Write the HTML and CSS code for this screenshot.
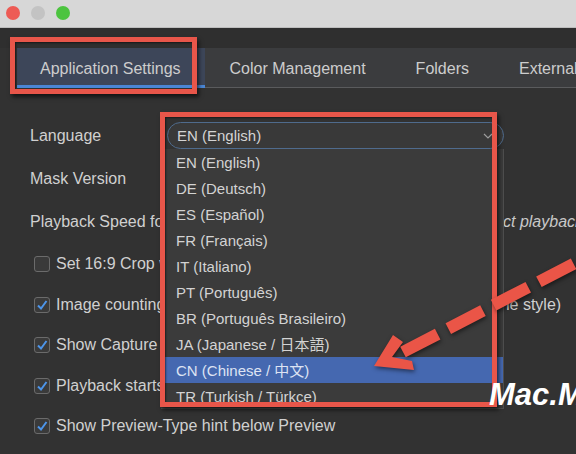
FILE: index.html
```html
<!DOCTYPE html>
<html>
<head>
<meta charset="utf-8">
<link rel="stylesheet" href="styles.css">
</head>
<body>
<div class="window">
  <div class="titlebar">
    <span class="light red"></span>
    <span class="light gray"></span>
    <span class="light green"></span>
  </div>
  <div class="strip"></div>
  <div class="tabs">
    <div class="tab active">Application Settings</div>
    <div class="tab">Color Management</div>
    <div class="tab">Folders</div>
    <div class="tab">External Editors</div>
  </div>
  <div class="content">
    <div class="row">
      <span class="label">Language</span>
      <div class="select lang">
        <span>EN (English)</span>
        <svg class="chev" width="10" height="6" viewBox="0 0 10 6"><path d="M1 1 L5 5 L9 1" fill="none" stroke="#9c9c9c" stroke-width="1.2"/></svg>
      </div>
    </div>
    <div class="row">
      <span class="label">Mask Version</span>
      <div class="select"><span>Version 2</span></div>
    </div>
    <div class="row">
      <span class="label">Playback Speed for Videos</span>
      <div class="select speed"><span>1.0x</span></div>
      <span class="hint">(direct playback speed)</span>
    </div>
    <div class="check-row">
      <span class="box"></span>
      <span class="ctext">Set 16:9 Crop when importing videos</span>
    </div>
    <div class="check-row">
      <span class="box on"><svg width="12" height="12" viewBox="0 0 12 12"><path d="M2 6.5 L5 9.5 L10.5 2" fill="none" stroke="#4d95ea" stroke-width="2"/></svg></span>
      <span class="ctext">Image counting in filenames starts at 1 instead of 0 (Capture One style)</span>
    </div>
    <div class="check-row">
      <span class="box on"><svg width="12" height="12" viewBox="0 0 12 12"><path d="M2 6.5 L5 9.5 L10.5 2" fill="none" stroke="#4d95ea" stroke-width="2"/></svg></span>
      <span class="ctext">Show Capture Info in Preview</span>
    </div>
    <div class="check-row">
      <span class="box on"><svg width="12" height="12" viewBox="0 0 12 12"><path d="M2 6.5 L5 9.5 L10.5 2" fill="none" stroke="#4d95ea" stroke-width="2"/></svg></span>
      <span class="ctext">Playback starts automatically</span>
    </div>
    <div class="check-row">
      <span class="box on"><svg width="12" height="12" viewBox="0 0 12 12"><path d="M2 6.5 L5 9.5 L10.5 2" fill="none" stroke="#4d95ea" stroke-width="2"/></svg></span>
      <span class="ctext">Show Preview-Type hint below Preview</span>
    </div>
  </div>

  <ul class="menu">
    <li>EN (English)</li>
    <li>DE (Deutsch)</li>
    <li>ES (Español)</li>
    <li>FR (Français)</li>
    <li>IT (Italiano)</li>
    <li>PT (Português)</li>
    <li>BR (Português Brasileiro)</li>
    <li>JA (Japanese / 日本語)</li>
    <li class="sel">CN (Chinese / 中文)</li>
    <li>TR (Turkish / Türkçe)</li>
    <li>RU (Russian / Русский)</li>
  </ul>

  <div class="mark mark-tab"></div>
  <div class="mark mark-menu"></div>

  <div class="watermark">Mac.Mi</div>

  <svg class="arrow" width="576" height="454" viewBox="0 0 576 454">
    <g fill="#ea5547" stroke="#ea5547">
      <path d="M403 352 L610 245" fill="none" stroke-width="12" stroke-dasharray="39 12"/>
      <polygon stroke="none" points="374,366 393,335 403,342 392,357 412,361 414,370"/>
    </g>
  </svg>
</div>
</body>
</html>
```

FILE: styles.css
```css
* { box-sizing: border-box; }
html, body { margin: 0; padding: 0; }
body {
  width: 576px;
  height: 454px;
  overflow: hidden;
  background: #323232;
  font-family: "Liberation Sans", Arial, sans-serif;
  color: #cfcfcf;
}
.window {
  position: relative;
  width: 576px;
  height: 454px;
  overflow: hidden;
  background: #323232;
}
.titlebar {
  height: 28px;
  background: #d7d7d7;
  border-bottom: 1px solid #bdbdbd;
  display: flex;
  align-items: center;
  gap: 11px;
  padding: 0 0 2px 6px;
}
.light {
  width: 14px;
  height: 14px;
  border-radius: 50%;
  display: block;
}
.light.red { background: #ed5b55; }
.light.gray { background: #c3c3c3; }
.light.green { background: #4cc43f; }
.strip {
  height: 20px;
  background: #2f2f2f;
}
.tabs {
  margin-left: 17px;
  height: 40px;
  background: #3b3c3e;
  box-shadow: inset 0 -1px #5a5b5d;
  display: flex;
  white-space: nowrap;
}
.tab {
  height: 40px;
  padding: 1px 25px 0;
  display: flex;
  align-items: center;
  font-size: 16px;
  color: #cdcdcd;
  flex: none;
}
.tab.active {
  padding: 1px 24px 0 23px;
  background: #3d4659;
  box-shadow: inset 0 -3px #4a86d5;
}
.content {
  padding-top: 26px;
  background: #323232;
}
.row {
  height: 43px;
  display: flex;
  align-items: center;
  padding-left: 30px;
  white-space: nowrap;
}
.label {
  width: 137px;
  flex: none;
  font-size: 16px;
  color: #d0d0d0;
  overflow: hidden;
}
.select {
  width: 337px;
  flex: none;
  height: 27px;
  border: 1px solid #555;
  border-radius: 14px;
  background: #393939;
  display: flex;
  align-items: center;
  justify-content: space-between;
  padding: 0 10px 0 9px;
  font-size: 15px;
  color: #d4d4d4;
}
.select.lang {
  border-color: #4f6b8d;
}
.select.speed {
  width: 292px;
}
.hint {
  margin-left: 12px;
  flex: none;
  font-size: 16px;
  font-style: italic;
  color: #c8c8c8;
}
.check-row {
  height: 40.5px;
  display: flex;
  align-items: center;
  padding-left: 34px;
  white-space: nowrap;
}
.row + .check-row { margin-top: 1px; }
.box {
  width: 16px;
  height: 16px;
  border: 1px solid #6b6b6b;
  border-radius: 3px;
  background: #3a3a3a;
  margin-right: 6px;
  display: flex;
  align-items: center;
  justify-content: center;
  flex: none;
}
.ctext {
  font-size: 16px;
  color: #d0d0d0;
  flex: none;
}
.menu {
  position: absolute;
  left: 161px;
  top: 149px;
  width: 343px;
  height: 260px;
  margin: 0;
  padding: 0;
  list-style: none;
  overflow: hidden;
  background: #3b3b3b;
  border-right: 1px solid #4e4e4e;
  border-bottom: 1px solid #4e4e4e;
}
.menu li {
  height: 26px;
  line-height: 27px;
  padding-left: 15px;
  font-size: 15px;
  color: #d3d3d3;
  font-family: "Liberation Sans", Arial, "Noto Sans CJK SC", sans-serif;
  white-space: nowrap;
}
.menu li.sel {
  background: #4568b0;
  color: #dde3f3;
}
.mark {
  position: absolute;
  border: 5px solid #e8564a;
  box-shadow: 2px 3px 4px rgba(0, 0, 0, 0.6), inset 1px 1px 2px rgba(0, 0, 0, 0.5);
}
.mark-tab {
  left: 10px;
  top: 37px;
  width: 187px;
  height: 57px;
}
.mark-menu {
  left: 160px;
  top: 112px;
  width: 337px;
  height: 295px;
}
.watermark {
  position: absolute;
  left: 489px;
  top: 379px;
  font-size: 31px;
  line-height: 1;
  font-weight: bold;
  font-style: italic;
  color: #ffffff;
  white-space: nowrap;
}
.arrow {
  position: absolute;
  left: 0;
  top: 0;
  filter: drop-shadow(1px 2px 2px rgba(0, 0, 0, 0.5));
}
```
